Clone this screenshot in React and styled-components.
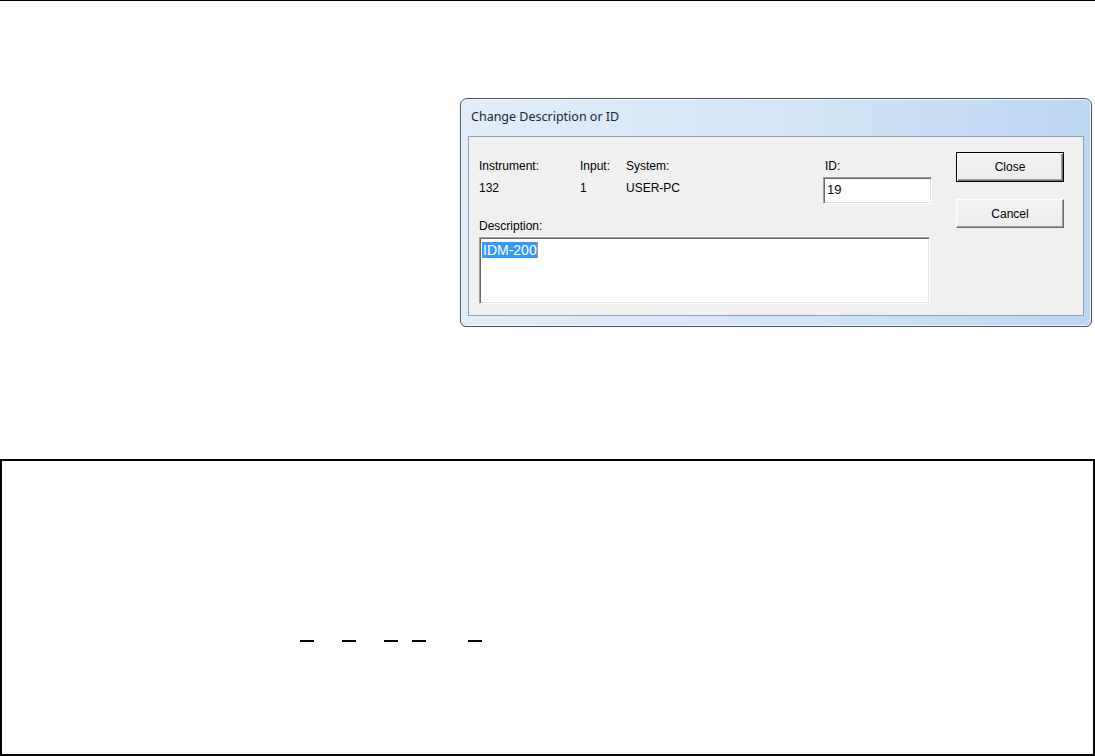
import React from "react";
import styled, { createGlobalStyle } from "styled-components";

const GlobalStyle = createGlobalStyle`
  html, body { margin: 0; padding: 0; background: #ffffff; }
  body { font-family: "Liberation Sans", Arial, sans-serif; }
  * { box-sizing: border-box; }
`;

const Page = styled.div`
  width: 1095px;
  height: 756px;
  display: flex;
  flex-direction: column;
  overflow: hidden;
  background: #fff;
`;

const TopRule = styled.div`
  height: 1px;
  background: #000;
  flex: none;
`;

const DialogRow = styled.div`
  display: flex;
  padding-left: 460px;
  margin-top: 97px;
  flex: none;
`;

const Frame = styled.div`
  width: 632px;
  height: 229px;
  border: 1px solid #4a5563;
  border-radius: 7px 7px 6px 6px;
  background: linear-gradient(90deg, #e2edf9 0%, #d2e4f6 55%, #bcd7f3 100%);
  box-shadow: inset 0 0 0 1px rgba(255, 255, 255, 0.7);
  padding: 0 7px 10px 7px;
  display: flex;
  flex-direction: column;
`;

const TitleBar = styled.div`
  height: 37px;
  display: flex;
  align-items: center;
  padding-left: 3px;
  padding-bottom: 2px;
  font-family: "Noto Sans", "Liberation Sans", sans-serif;
  font-size: 12.5px;
  color: #1c2633;
`;

const Client = styled.div`
  flex: 1;
  background: #f0f0f0;
  border: 1px solid #8ea3b9;
  display: flex;
  padding: 0 17px 11px 10px;
  font-family: "Liberation Sans", Arial, sans-serif;
  font-size: 12px;
  color: #000;
`;

const LeftPane = styled.div`
  width: 453px;
  padding-top: 23px;
  display: grid;
  grid-template-columns: 101px 46px 197px 109px;
  grid-template-rows: 13px 27px auto auto;
  row-gap: 4px;
  align-content: start;
`;

const Label = styled.div`
  line-height: 13px;
  white-space: nowrap;
  padding-left: ${(p) => (p.$indent ? "2px" : "0")};
`;

const Value = styled.div`
  line-height: 13px;
  align-self: start;
  margin-top: 5px;
  white-space: nowrap;
`;

const DescLabel = styled(Label)`
  grid-column: 1 / -1;
  margin-top: 12px;
`;

const Sunken = styled.div`
  background: #fff;
  border-top: 1px solid #a0a0a0;
  border-left: 1px solid #a0a0a0;
  border-right: 1px solid #ffffff;
  border-bottom: 1px solid #ffffff;
  box-shadow: inset 1px 1px 0 #696969, inset -1px -1px 0 #e3e3e3;
`;

const IdField = styled(Sunken)`
  height: 27px;
  width: 109px;
  padding: 5px 3px;
  line-height: 14px;
  font-size: 13px;
`;

const DescField = styled(Sunken)`
  grid-column: 1 / -1;
  width: 451px;
  height: 67px;
  padding: 4px 2px;
  font-size: 14px;
  line-height: 16px;
`;

const Selected = styled.span`
  background: #3399ff;
  color: #fff;
  padding: 0 0 0 1px;
  border-right: 1px solid #e08a2e;
`;

const Buttons = styled.div`
  margin-left: 24px;
  padding-top: 15px;
  display: flex;
  flex-direction: column;
  gap: 17px;
`;

const Button = styled.div`
  width: 108px;
  height: ${(p) => (p.$default ? "30px" : "29px")};
  display: flex;
  align-items: center;
  justify-content: center;
  background: linear-gradient(#f4f4f4, #ececec);
  border: 1px solid ${(p) => (p.$default ? "#000" : "#6c6c6c")};
  border-top-color: ${(p) => (p.$default ? "#000" : "#ffffff")};
  border-left-color: ${(p) => (p.$default ? "#000" : "#ffffff")};
  box-shadow: ${(p) =>
    p.$default
      ? "inset 1px 1px 0 #fff, inset -1px -1px 0 #6c6c6c, inset -2px -2px 0 #a0a0a0"
      : "inset -1px -1px 0 #a0a0a0, inset 1px 1px 0 #f4f4f4"};
  font-size: 12px;
  color: #000;
`;

const BottomBox = styled.div`
  margin-top: 132px;
  width: 1095px;
  flex: 1;
  border: 2px solid #000;
  display: flex;
  flex-direction: column;
`;

const DashRow = styled.div`
  margin-top: 179px;
  padding-left: 298px;
  display: flex;
  align-items: center;
`;

const Dash = styled.span`
  width: 14px;
  height: 2px;
  background: #000;
  margin-left: ${(p) => p.$gap}px;
`;

const dashGaps = [0, 28, 28, 14, 42];

export default function App() {
  return (
    <>
      <GlobalStyle />
      <Page>
        <TopRule />
        <DialogRow>
          <Frame>
            <TitleBar>Change Description or ID</TitleBar>
            <Client>
              <LeftPane>
                <Label>Instrument:</Label>
                <Label>Input:</Label>
                <Label>System:</Label>
                <Label $indent>ID:</Label>
                <Value>132</Value>
                <Value>1</Value>
                <Value>USER-PC</Value>
                <IdField>19</IdField>
                <DescLabel>Description:</DescLabel>
                <DescField>
                  <Selected>IDM-200</Selected>
                </DescField>
              </LeftPane>
              <Buttons>
                <Button $default>Close</Button>
                <Button>Cancel</Button>
              </Buttons>
            </Client>
          </Frame>
        </DialogRow>
        <BottomBox>
          <DashRow>
            {dashGaps.map((g, i) => (
              <Dash key={i} $gap={g} />
            ))}
          </DashRow>
        </BottomBox>
      </Page>
    </>
  );
}
